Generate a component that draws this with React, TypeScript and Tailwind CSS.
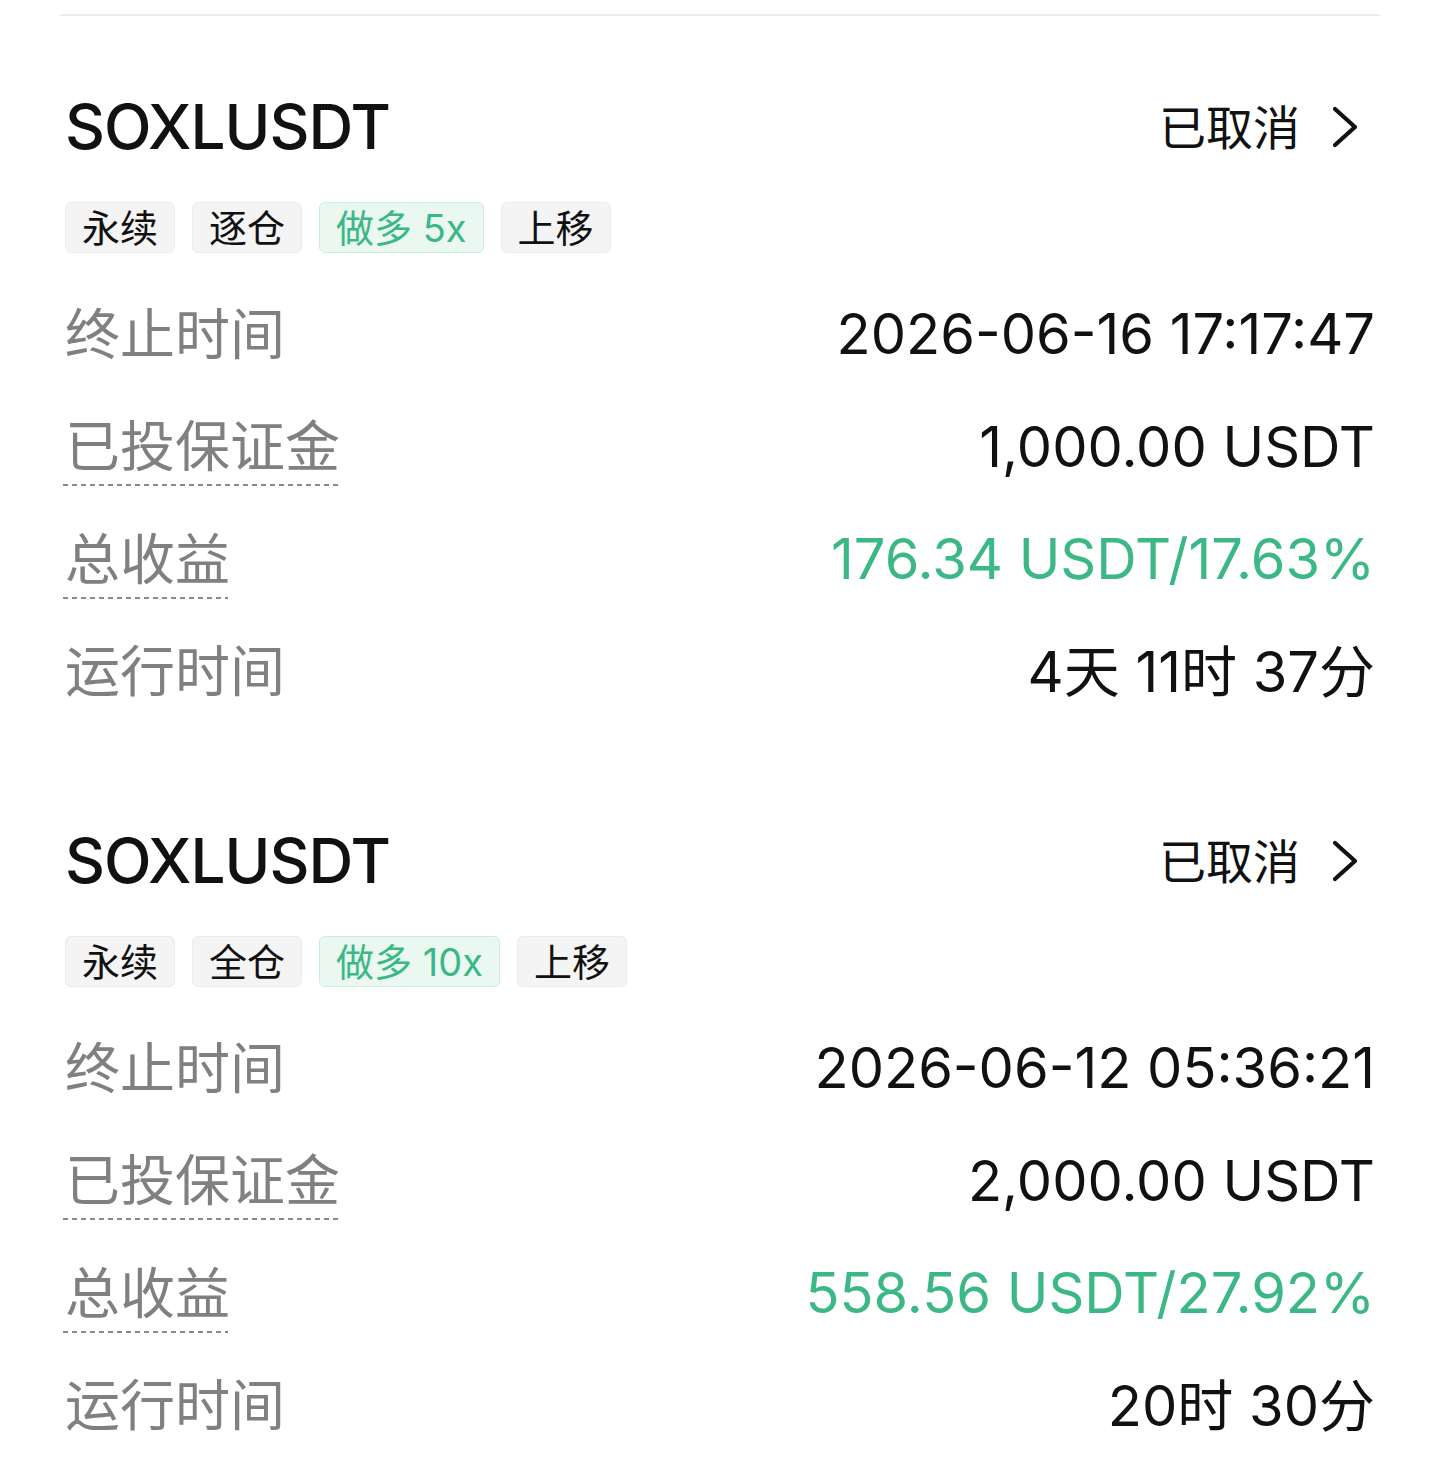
import React from "react";

const FONT = "font-['Inter','Noto_Sans_CJK_SC',sans-serif]";

type Tag = { text: string; green?: boolean };
type Row = { label: string; value: string; dotted?: boolean; green?: boolean };

function Chevron() {
  return (
    <svg width="26" height="42" viewBox="0 0 26 42" className="ml-[32px]">
      <polyline points="3,3 23,21 3,39" fill="none" stroke="#111" strokeWidth="4.2" strokeLinecap="round" strokeLinejoin="round" />
    </svg>
  );
}

function Card({ tags, rows, first }: { tags: Tag[]; rows: Row[]; first?: boolean }) {
  return (
    <div className={`px-[5px] ${first ? "mt-[71px]" : "mt-[93px]"}`}>
      <div className="flex h-[80px] items-center justify-between">
        <div className="text-[62px] font-medium leading-none tracking-[-1px] text-[#111]">SOXLUSDT</div>
        <div className="mr-[17px] flex items-center">
          <span className="text-[47px] leading-none text-[#111]">已取消</span>
          <Chevron />
        </div>
      </div>
      <div className="mt-[35px] flex gap-[17px]">
        {tags.map((t, i) => (
          <div
            key={i}
            className={`flex h-[51px] items-center rounded-[6px] border px-[16px] text-[38px] leading-none ${
              t.green
                ? "border-[#c9eedc] bg-[#eaf8f1] text-[#3cb887]"
                : "border-[#ececec] bg-[#f4f4f4] text-[#111]"
            }`}
          >
            {t.text}
          </div>
        ))}
      </div>
      <div className="mt-[25px] flex flex-col">
        {rows.map((r, i) => (
          <div key={i} className="flex h-[112.5px] items-center justify-between">
            <div className="relative">
              <span className="text-[55px] leading-none text-[#808080]">{r.label}</span>
              {r.dotted && (
                <div className="absolute left-[-2px] right-[2px] top-[65px] h-[2px] bg-[linear-gradient(to_right,#8a8a8a_55%,transparent_55%)] bg-[length:9px_2px] bg-repeat-x" />
              )}
            </div>
            <div className={`text-[56px] leading-none ${r.green ? "text-[#3cb887]" : "text-[#111]"}`}>
              {r.value}
            </div>
          </div>
        ))}
      </div>
    </div>
  );
}

export default function App() {
  return (
    <div className={`min-h-[1483px] w-full bg-white px-[60px] ${FONT}`}>
      <div className="h-[14px]" />
      <div className="h-[2px] bg-[#ececec]" />
      <Card
        first
        tags={[{ text: "永续" }, { text: "逐仓" }, { text: "做多 5x", green: true }, { text: "上移" }]}
        rows={[
          { label: "终止时间", value: "2026-06-16 17:17:47" },
          { label: "已投保证金", value: "1,000.00 USDT", dotted: true },
          { label: "总收益", value: "176.34 USDT/17.63%", dotted: true, green: true },
          { label: "运行时间", value: "4天 11时 37分" },
        ]}
      />
      <Card
        tags={[{ text: "永续" }, { text: "全仓" }, { text: "做多 10x", green: true }, { text: "上移" }]}
        rows={[
          { label: "终止时间", value: "2026-06-12 05:36:21" },
          { label: "已投保证金", value: "2,000.00 USDT", dotted: true },
          { label: "总收益", value: "558.56 USDT/27.92%", dotted: true, green: true },
          { label: "运行时间", value: "20时 30分" },
        ]}
      />
    </div>
  );
}
